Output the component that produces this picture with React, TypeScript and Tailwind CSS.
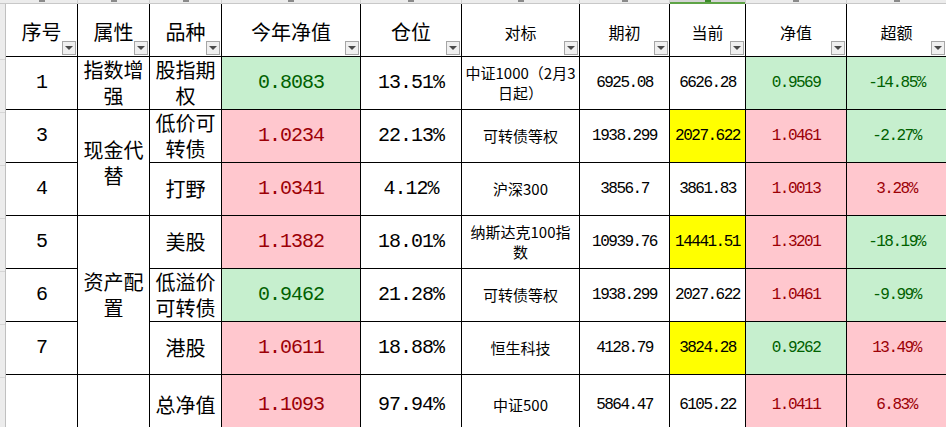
type Tone = 'g' | 'r' | 'y' | 'w'

interface Val {
  v: string
  t?: Tone
}

interface Row {
  no: string
  attr?: { lines: string[]; span: number }
  kind: string[]
  ytd: Val
  pos: string
  bench: string[]
  start: string
  cur: Val
  nav: Val
  ex: Val
}

const rows: Row[] = [
  {
    no: '1',
    attr: { lines: ['指数增', '强'], span: 1 },
    kind: ['股指期', '权'],
    ytd: { v: '0.8083', t: 'g' },
    pos: '13.51%',
    bench: ['中证1000（2月3', '日起）'],
    start: '6925.08',
    cur: { v: '6626.28' },
    nav: { v: '0.9569', t: 'g' },
    ex: { v: '-14.85%', t: 'g' },
  },
  {
    no: '3',
    attr: { lines: ['现金代', '替'], span: 2 },
    kind: ['低价可', '转债'],
    ytd: { v: '1.0234', t: 'r' },
    pos: '22.13%',
    bench: ['可转债等权'],
    start: '1938.299',
    cur: { v: '2027.622', t: 'y' },
    nav: { v: '1.0461', t: 'r' },
    ex: { v: '-2.27%', t: 'g' },
  },
  {
    no: '4',
    kind: ['打野'],
    ytd: { v: '1.0341', t: 'r' },
    pos: '4.12%',
    bench: ['沪深300'],
    start: '3856.7',
    cur: { v: '3861.83' },
    nav: { v: '1.0013', t: 'r' },
    ex: { v: '3.28%', t: 'r' },
  },
  {
    no: '5',
    attr: { lines: ['资产配', '置'], span: 3 },
    kind: ['美股'],
    ytd: { v: '1.1382', t: 'r' },
    pos: '18.01%',
    bench: ['纳斯达克100指', '数'],
    start: '10939.76',
    cur: { v: '14441.51', t: 'y' },
    nav: { v: '1.3201', t: 'r' },
    ex: { v: '-18.19%', t: 'g' },
  },
  {
    no: '6',
    kind: ['低溢价', '可转债'],
    ytd: { v: '0.9462', t: 'g' },
    pos: '21.28%',
    bench: ['可转债等权'],
    start: '1938.299',
    cur: { v: '2027.622' },
    nav: { v: '1.0461', t: 'r' },
    ex: { v: '-9.99%', t: 'g' },
  },
  {
    no: '7',
    kind: ['港股'],
    ytd: { v: '1.0611', t: 'r' },
    pos: '18.88%',
    bench: ['恒生科技'],
    start: '4128.79',
    cur: { v: '3824.28', t: 'y' },
    nav: { v: '0.9262', t: 'g' },
    ex: { v: '13.49%', t: 'r' },
  },
  {
    no: '',
    attr: { lines: [], span: 1 },
    kind: ['总净值'],
    ytd: { v: '1.1093', t: 'r' },
    pos: '97.94%',
    bench: ['中证500'],
    start: '5864.47',
    cur: { v: '6105.22' },
    nav: { v: '1.0411', t: 'r' },
    ex: { v: '6.83%', t: 'r' },
  },
]

const tone = {
  g: 'bg-[#c6efce] text-[#006100]',
  r: 'bg-[#ffc7ce] text-[#9c0006]',
  y: 'bg-[#ffff00] text-black',
  w: 'bg-white text-black',
}

const cjk = "font-['Noto_Sans_CJK_SC',sans-serif]"
const bigNum = "font-['Liberation_Mono',monospace] text-[20px] tracking-[-1px]"
const smallNum = "font-['Liberation_Mono',monospace] text-[16px] tracking-[-1.5px]"

function Filter() {
  return (
    <span className="absolute right-px bottom-px w-[14px] h-[14px] bg-[#f0f0f0] border border-[#a6a6a6] flex items-center justify-center">
      <svg width="8" height="4" viewBox="0 0 8 4">
        <path d="M0 0h8L4 4z" fill="#4a4a4a" />
      </svg>
    </span>
  )
}

function Head({ label, small }: { label: string; small?: boolean }) {
  return (
    <div className={`relative bg-white flex items-center justify-center pt-1 ${cjk} ${small ? 'text-[16px]' : 'text-[20px]'}`}>
      {label}
      <Filter />
    </div>
  )
}

function Lines({ lines, lh }: { lines: string[]; lh: string }) {
  return (
    <div className={`text-center whitespace-nowrap ${lh}`}>
      {lines.map((l, i) => (
        <div key={i}>{l}</div>
      ))}
    </div>
  )
}

function Cell({ children, t = 'w', className = '' }: { children?: React.ReactNode; t?: Tone; className?: string }) {
  return <div className={`flex items-center justify-center ${tone[t]} ${className}`}>{children}</div>
}

const colLetters = [0, 1, 2, 3, 4, 5, 6, 7, 8, 9]

export default function App() {
  return (
    <div className="w-[946px] h-[427px] overflow-hidden bg-white flex flex-col">
      {/* Column header strip (cut off) */}
      <div className="flex h-[4px] shrink-0">
        <div className="w-[6px] bg-[#ececec] border-b border-[#c8c8c8]" />
        <div className="grid grid-cols-[71px_71px_71px_138px_100px_117px_89px_75px_100px_99px] gap-px bg-[#d0d0d0] flex-1">
          {colLetters.map((i) => (
            <div
              key={i}
              className={`relative flex justify-center ${i === 7 ? 'bg-[#d4d4d4] border-b-2 border-[#5ea346]' : 'bg-[#ececec] border-b border-[#c8c8c8]'}`}
            >
              <span className={`w-[6px] h-[2px] ${i === 7 ? 'bg-[#3d8a2a]' : 'bg-[#8a8a8a]'}`} />
            </div>
          ))}
        </div>
      </div>

      <div className="flex flex-1">
        {/* Row header strip */}
        <div className="w-[6px] shrink-0 bg-[#ececec] border-r border-[#c0c0c0] flex flex-col">
          <div className="h-[56px] border-b border-[#d6d6d6]" />
          {[0, 1, 2, 3, 4, 5].map((i) => (
            <div key={i} className="h-[53px] border-b border-[#d6d6d6]" />
          ))}
        </div>

        <div className="grid grid-cols-[71px_71px_71px_138px_100px_117px_89px_75px_100px_99px] grid-rows-[52px_52px_52px_52px_52px_52px_52px_60px] gap-px bg-black self-start">
          <Head label="序号" />
          <Head label="属性" />
          <Head label="品种" />
          <Head label="今年净值" />
          <Head label="仓位" />
          <Head label="对标" small />
          <Head label="期初" small />
          <Head label="当前" small />
          <Head label="净值" small />
          <Head label="超额" small />

          {rows.map((r, i) => (
            <div key={i} className="contents">
              <Cell className={bigNum}>{r.no}</Cell>
              {r.attr && (
                <Cell
                  className={`${cjk} text-[20px] ${r.attr.span === 2 ? 'row-span-2' : r.attr.span === 3 ? 'row-span-3' : ''}`}
                >
                  <Lines lines={r.attr.lines} lh="leading-[26px]" />
                </Cell>
              )}
              <Cell className={`${cjk} text-[20px]`}>
                <Lines lines={r.kind} lh="leading-[26px]" />
              </Cell>
              <Cell t={r.ytd.t} className={bigNum}>{r.ytd.v}</Cell>
              <Cell className={bigNum}>{r.pos}</Cell>
              <Cell className={`${cjk} text-[15px]`}>
                <Lines lines={r.bench} lh="leading-[20px]" />
              </Cell>
              <Cell className={smallNum}>{r.start}</Cell>
              <Cell t={r.cur.t} className={smallNum}>{r.cur.v}</Cell>
              <Cell t={r.nav.t} className={smallNum}>{r.nav.v}</Cell>
              <Cell t={r.ex.t} className={smallNum}>{r.ex.v}</Cell>
            </div>
          ))}
        </div>
      </div>
    </div>
  )
}
